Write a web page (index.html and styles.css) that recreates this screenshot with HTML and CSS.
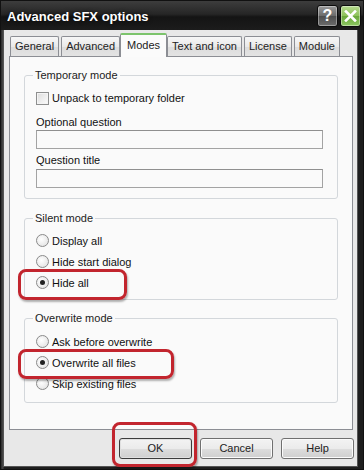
FILE: index.html
```html
<!DOCTYPE html>
<html lang="en">
<head>
  <meta charset="UTF-8" />
  <title>Advanced SFX options</title>
  <link rel="stylesheet" href="styles.css">
</head>
<body>
  <div class="window">
    <div class="titlebar">
      <span class="title">Advanced SFX options</span>
      <div class="caption-btns">
        <span class="cap-btn help">?</span>
        <span class="cap-btn close">
          <svg width="13" height="12" viewBox="0 0 13 12">
            <path d="M2 1.5 L11 10.5 M11 1.5 L2 10.5" stroke="#fff" stroke-width="2.6" stroke-linecap="square" fill="none"/>
          </svg>
        </span>
      </div>
    </div>

    <div class="client">
      <div class="tabs">
        <span class="tab">General</span>
        <span class="tab">Advanced</span>
        <span class="tab active">Modes</span>
        <span class="tab">Text and icon</span>
        <span class="tab">License</span>
        <span class="tab">Module</span>
      </div>

      <div class="panel">
        <fieldset class="group group-temp">
          <legend>Temporary mode</legend>
          <label class="option first"><span class="check"></span>Unpack to temporary folder</label>
          <div class="field-label">Optional question</div>
          <div class="textbox"></div>
          <div class="field-label second">Question title</div>
          <div class="textbox"></div>
        </fieldset>

        <fieldset class="group group-silent">
          <legend>Silent mode</legend>
          <label class="option radio-row"><span class="radio"></span>Display all</label>
          <label class="option radio-row"><span class="radio"></span>Hide start dialog</label>
          <label class="option radio-row"><span class="radio on"></span>Hide all</label>
        </fieldset>

        <fieldset class="group group-over">
          <legend>Overwrite mode</legend>
          <label class="option radio-row"><span class="radio"></span>Ask before overwrite</label>
          <label class="option radio-row"><span class="radio on"></span>Overwrite all files</label>
          <label class="option radio-row"><span class="radio"></span>Skip existing files</label>
        </fieldset>
      </div>

      <div class="buttons">
        <span class="btn default">OK</span>
        <span class="btn">Cancel</span>
        <span class="btn">Help</span>
      </div>
    </div>

    <!-- red highlight marks drawn over the dialog -->
    <div class="mark mark-hide"></div>
    <div class="mark mark-over"></div>
    <div class="mark mark-ok"></div>
  </div>
</body>
</html>
```

FILE: styles.css
```css
* { box-sizing: border-box; }
body {
  margin: 0;
  background: #fff;
  font-family: "Liberation Sans", Arial, sans-serif;
  font-size: 11px;
  color: #111;
}
.window {
  position: relative;
  width: 364px;
  height: 470px;
  display: flex;
  flex-direction: column;
  background: linear-gradient(90deg, #2a2a2a 0, #4a4a4a 2px, #1e1e1e 3px, #1e1e1e 100%);
  border: 1px solid #111;
}
.titlebar {
  height: 29px;
  display: flex;
  align-items: center;
  justify-content: space-between;
  padding: 0 2px 0 6px;
  background: linear-gradient(#3d3d3d 0, #262626 45%, #141414 55%, #1c1c1c 100%);
}
.title {
  color: #fff;
  font-weight: bold;
  font-size: 13px;
  margin-top: 1px;
  text-shadow: 0 0 4px rgba(0,0,0,0.8);
}
.caption-btns {
  display: flex;
  gap: 2px;
  margin-top: 1px;
}
.cap-btn {
  width: 21px;
  height: 22px;
  border: 1px solid #0c0c0c;
  border-radius: 3px;
  display: flex;
  align-items: center;
  justify-content: center;
}
.cap-btn.help {
  background: linear-gradient(#9a9a9a, #6a6a6a 50%, #4e4e4e 51%, #6c6c6c);
  color: #fff;
  font-weight: bold;
  font-size: 16px;
  box-shadow: inset 0 0 0 1px rgba(255,255,255,0.35);
}
.cap-btn.close {
  background: linear-gradient(#b5d98e, #8cc158 50%, #6aa83a 51%, #8dc862);
  box-shadow: inset 0 0 0 1px rgba(255,255,255,0.4);
}
.client {
  flex: 1;
  margin: 0 5px 2px 2px;
  padding: 0 4px 0 5px;
  background: #e8e8e8;
  display: flex;
  flex-direction: column;
  border: 1px solid #555;
  border-top: none;
}
.tabs {
  height: 26px;
  display: flex;
  align-items: flex-end;
  padding-left: 1px;
  position: relative;
  z-index: 1;
}
.tab {
  height: 20px;
  line-height: 19px;
  padding: 0 4px;
  margin-right: 2px;
  white-space: nowrap;
  border: 1px solid #8c8e94;
  border-bottom: none;
  border-radius: 2px 2px 0 0;
  background: linear-gradient(#f7f7f7, #e9e9e9 50%, #dcdcdc 51%, #e3e3e3);
  color: #222;
}
.tab.active {
  height: 24px;
  line-height: 20px;
  margin: 0 0 -1px -2px;
  padding: 0 6px;
  background: #fbfbfb;
  border-top: 2px solid #7cc46c;
}
.panel {
  flex: 1;
  background: #fafafa;
  border: 1px solid #8c8e94;
  padding: 11px 14px 0 14px;
}
.group {
  margin: 0;
  border: 1px solid #d3d7db;
  border-radius: 3px;
  padding: 0 14px 0 11px;
}
.group legend {
  padding: 0 2px;
  margin-left: -3px;
  line-height: 14px;
  color: #222;
}
.group-temp { padding-bottom: 10px; }
.group-silent { margin-top: 12px; padding-top: 5px; padding-bottom: 6px; }
.group-over { margin-top: 11px; padding-top: 6px; padding-bottom: 8px; }
.option {
  display: flex;
  align-items: center;
  gap: 3px;
  height: 16px;
}
.option.first { margin-top: 8px; }
.radio-row { height: 21px; }
.check {
  width: 13px;
  height: 13px;
  border: 1px solid #8e8f8f;
  background: linear-gradient(135deg, #dcdcdc, #fcfcfc);
  box-shadow: inset 0 0 0 1px #f4f4f4;
}
.radio {
  width: 13px;
  height: 13px;
  border: 1px solid #8a8a8a;
  border-radius: 50%;
  background: radial-gradient(circle at 40% 40%, #fff, #dedede);
  display: flex;
  align-items: center;
  justify-content: center;
}
.radio.on::after {
  content: "";
  width: 5px;
  height: 5px;
  border-radius: 50%;
  background: #222;
}
.field-label {
  margin-top: 9px;
  line-height: 14px;
}
.field-label.second { margin-top: 4px; }
.textbox {
  margin-top: 1px;
  height: 19px;
  border: 1px solid #a3a3a3;
  border-top-color: #8f8f8f;
  background: #fafafa;
}
.field-label.second + .textbox { margin-top: 2px; }
.buttons {
  height: 36px;
  display: flex;
  justify-content: flex-end;
  align-items: flex-start;
  gap: 8px;
  padding-top: 8px;
  margin-right: -1px;
}
.btn {
  width: 73px;
  height: 21px;
  line-height: 19px;
  text-align: center;
  border: 1px solid #707070;
  border-radius: 3px;
  background: linear-gradient(#f3f3f3, #ebebeb 50%, #dddddd 51%, #cfcfcf);
  box-shadow: inset 0 0 0 1px #fbfbfb;
  color: #222;
}
.btn.default {
  border-color: #3c3c3c;
  box-shadow: inset 0 0 0 1px #e0e0e0;
}
.mark {
  position: absolute;
  border: 3px solid #c2252e;
  border-radius: 8px;
  box-shadow: 1px 2px 2px rgba(0,0,0,0.3);
}
.mark-hide { left: 17px; top: 268px; width: 109px; height: 31px; }
.mark-over { left: 17px; top: 348px; width: 156px; height: 30px; }
.mark-ok { left: 111px; top: 421px; width: 85px; height: 45px; }
```
